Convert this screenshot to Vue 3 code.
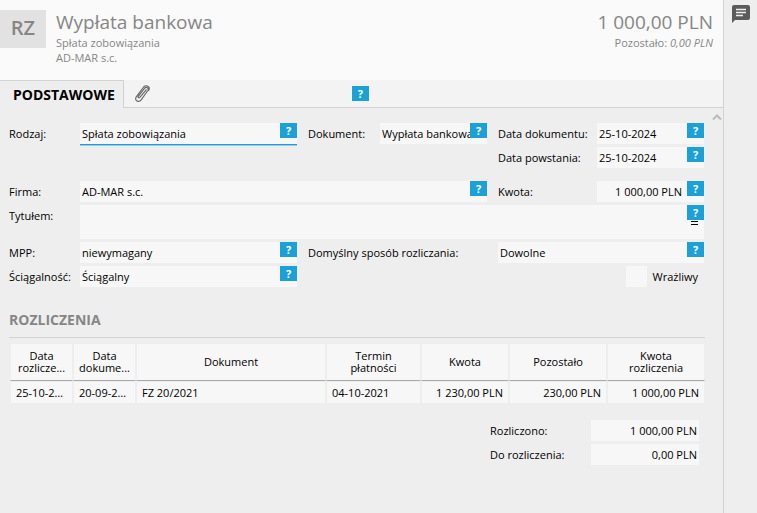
<script setup>
import { ref } from 'vue'

const form = ref({
  kind: 'Spłata zobowiązania',
  document: 'Wypłata bankowa',
  documentDate: '25-10-2024',
  createdDate: '25-10-2024',
  company: 'AD-MAR s.c.',
  amount: '1 000,00 PLN',
  title: '',
  mpp: 'niewymagany',
  method: 'Dowolne',
  collectability: 'Ściągalny',
  sensitive: false,
  settled: '1 000,00 PLN',
  remaining: '0,00 PLN',
})

const rows = [
  ['25-10-2024', '20-09-2021', 'FZ 20/2021', '04-10-2021', '1 230,00 PLN', '230,00 PLN', '1 000,00 PLN'],
]
</script>

<template>
  <div class="app">
    <main class="main">
      <header class="header">
        <div class="avatar">RZ</div>
        <div class="heading">
          <h1>Wypłata bankowa</h1>
          <p>Spłata zobowiązania</p>
          <p>AD-MAR s.c.</p>
        </div>
        <div class="summary">
          <strong>1 000,00 PLN</strong>
          <p>Pozostało: <em>0,00 PLN</em></p>
        </div>
      </header>

      <nav class="tabs">
        <button type="button" class="tab active">PODSTAWOWE</button>
        <button type="button" class="tab clip" aria-label="Załączniki">
          <svg width="18" height="18" viewBox="0 0 18 18" fill="none" stroke="#6a6a6a" stroke-width="1.2" stroke-linecap="round">
            <path d="M13.200 4.800 6.800 12.400c-.9 1-2.300-.1-1.400-1.200L11.500 3.300c1.800-2.200 4.800-.2 3.300 2.200L8.200 14.900c-2.400 3.200-7.200.6-4.900-3.100L10.600 2c1.600-1.900 4.700-1.500 5.500.5.400 1 .1 2-.6 3" />
          </svg>
        </button>
        <div class="tabs-rest"><button type="button" class="help">?</button></div>
      </nav>

      <section class="body">
        <svg class="chevron" width="10" height="8" viewBox="0 0 10 8" fill="none" stroke="#bcbcbc" stroke-width="2">
          <path d="M1 6.500 5 2.500l4 4" />
        </svg>
        <form class="form" @submit.prevent>
          <label for="kind">Rodzaj:</label>
          <div class="field focused"><input id="kind" v-model="form.kind" type="text" /><button type="button" class="help">?</button></div>
          <label class="c4" for="document">Dokument:</label>
          <div class="field"><input id="document" v-model="form.document" type="text" /><button type="button" class="help">?</button></div>
          <label class="c7" for="documentDate">Data dokumentu:</label>
          <div class="field"><input id="documentDate" v-model="form.documentDate" type="text" /><button type="button" class="help">?</button></div>

          <label class="c7" for="createdDate">Data powstania:</label>
          <div class="field"><input id="createdDate" v-model="form.createdDate" type="text" /><button type="button" class="help">?</button></div>

          <label class="c1 spaced" for="company">Firma:</label>
          <div class="field wide spaced"><input id="company" v-model="form.company" type="text" /><button type="button" class="help">?</button></div>
          <label class="c7 spaced" for="amount">Kwota:</label>
          <div class="field money spaced"><input id="amount" v-model="form.amount" type="text" /><button type="button" class="help">?</button></div>

          <label class="c1" for="title">Tytułem:</label>
          <div class="field full">
            <textarea id="title" v-model="form.title"></textarea>
            <button type="button" class="help">?</button>
            <span class="grip"></span>
          </div>

          <label class="c1" for="mpp">MPP:</label>
          <div class="field"><input id="mpp" v-model="form.mpp" type="text" /><button type="button" class="help">?</button></div>
          <label class="c4 long" for="method">Domyślny sposób rozliczania:</label>
          <div class="field method"><input id="method" v-model="form.method" type="text" /><button type="button" class="help">?</button></div>

          <label class="c1" for="collectability">Ściągalność:</label>
          <div class="field"><input id="collectability" v-model="form.collectability" type="text" /><button type="button" class="help">?</button></div>
          <label class="check"><input v-model="form.sensitive" type="checkbox" />Wrażliwy</label>
        </form>

        <h2>ROZLICZENIA</h2>
        <table>
          <colgroup>
            <col class="w-date" /><col class="w-date" /><col /><col class="w-due" />
            <col class="w-amount" /><col class="w-left" /><col class="w-left" />
          </colgroup>
          <thead>
            <tr>
              <th>Data<br />rozlicze...</th>
              <th>Data<br />dokume...</th>
              <th>Dokument</th>
              <th>Termin<br />płatności</th>
              <th>Kwota</th>
              <th>Pozostało</th>
              <th>Kwota<br />rozliczenia</th>
            </tr>
          </thead>
          <tbody>
            <tr v-for="row in rows" :key="row[2]">
              <td v-for="(cell, i) in row" :key="i" :class="{ num: i > 3 }">{{ cell }}</td>
            </tr>
          </tbody>
        </table>

        <div class="totals">
          <label for="settled">Rozliczono:</label>
          <div class="field"><input id="settled" v-model="form.settled" type="text" /></div>
          <label for="remaining">Do rozliczenia:</label>
          <div class="field"><input id="remaining" v-model="form.remaining" type="text" /></div>
        </div>
      </section>
    </main>

    <aside class="side">
      <button type="button" aria-label="Komentarze">
        <svg width="18" height="18" viewBox="0 0 18 18">
          <path fill="#5b5b5b" d="M2 0h14a2 2 0 0 1 2 2v11a2 2 0 0 1-2 2H3l-3 3V2a2 2 0 0 1 2-2z" />
          <path stroke="#eee" stroke-width="1.500" d="M4 4.500h10M4 7.500h10M4 10.500h7" />
        </svg>
      </button>
    </aside>
  </div>
</template>

<style>
body {
  background: #eeeeee;
}
</style>

<style scoped>
.app {
  display: flex;
  min-height: 100vh;
  font-family: "Open Sans", "Noto Sans", sans-serif;
  font-size: 11px;
  line-height: 15px;
  color: #000;
  background: #eeeeee;
}
h1, h2, p {
  margin: 0;
}
button, input, textarea {
  font: inherit;
  color: inherit;
  border: 0;
  padding: 0;
  margin: 0;
  border-radius: 0;
  background: none;
}
.main {
  flex: 1;
  min-width: 0;
}
.header {
  display: flex;
  height: 70px;
  padding: 10px 10px 0 0;
  gap: 10px;
  background: #fafafa;
  color: #868686;
}
.avatar {
  width: 46px;
  height: 38px;
  line-height: 36px;
  text-align: center;
  font-size: 20px;
  font-weight: 600;
  background: #e2e2e2;
}
.heading {
  flex: 1;
}
h1, .summary strong {
  display: block;
  font-size: 19px;
  line-height: 24px;
  font-weight: 400;
}
h1, .summary strong {
  padding-bottom: 1px;
}
.summary {
  text-align: right;
}
.tabs {
  display: flex;
  height: 28px;
  background: #f3f3f3;
}
.tab {
  border-bottom: 1px solid #d2d2d2;
}
.tab.active {
  padding: 0 8px 0 13px;
  font-size: 14px;
  font-weight: 700;
  background: #eeeeee;
  border-top: 1px solid #d2d2d2;
  border-right: 1px solid #d2d2d2;
  border-bottom: 0;
}
.clip {
  width: 36px;
}
.clip svg {
  display: block;
  margin: 0 auto;
}
.tabs-rest {
  flex: 1;
  display: flex;
  align-items: flex-start;
  padding: 6px 0 0 192px;
  border-bottom: 1px solid #d2d2d2;
}
.help {
  width: 17px;
  height: 15px;
  font-family: "Noto Sans", sans-serif;
  font-size: 11px;
  line-height: 15px;
  font-weight: 700;
  text-align: center;
  color: #fff;
  background: #1ba1d6;
}
.body {
  position: relative;
  padding: 15px 18px 0 9px;
}
.chevron {
  position: absolute;
  top: 5px;
  right: 1px;
}
.form {
  display: grid;
  grid-template-columns: 71px minmax(0, 217fr) 11px 72px minmax(0, 107fr) 11px 99px minmax(0, 107fr);
  row-gap: 3px;
  padding-right: 1px;
}
label {
  line-height: 21px;
  white-space: nowrap;
}
.c1 { grid-column: 1; }
.c4 { grid-column: 4; }
.c7 { grid-column: 7; }
.long { grid-column: 4 / 7; }
.wide { grid-column: 2 / 6; }
.full { grid-column: 2 / 9; }
.method { grid-column: 7 / 9; }
.spaced { margin-top: 10px; }
.field {
  position: relative;
  display: flex;
  height: 21px;
  background: #f7f7f7;
}
.field input {
  flex: 1;
  min-width: 0;
  padding: 0 2px;
  outline: none;
}
.field .help {
  position: absolute;
  top: 0;
  right: 0;
}
.focused {
  box-shadow: 0 1px #1ba1e2, 0 2px #8fcdee;
}
.money input {
  padding-right: 22px;
  text-align: right;
}
.field.full {
  height: 34px;
}
textarea {
  flex: 1;
  resize: none;
  outline: none;
}
.grip {
  position: absolute;
  right: 6px;
  top: 16px;
  width: 7px;
  height: 2px;
  border: solid #000;
  border-width: 1px 0;
}
.check {
  grid-column: 7 / 9;
  display: flex;
  justify-content: flex-end;
  gap: 5px;
  padding-right: 6px;
}
.check input {
  appearance: none;
  width: 21px;
  height: 21px;
  background: #f7f7f7;
}
h2 {
  padding: 22px 0 6px;
  font-size: 14px;
  line-height: 22px;
  font-weight: 700;
  color: #868686;
  border-bottom: 1px solid #d2d2d2;
}
table {
  width: 100%;
  margin-top: 6px;
  padding-left: 1px;
  border-collapse: separate;
  border-spacing: 0;
  table-layout: fixed;
}
.w-date { width: 63px; }
.w-due { width: 95px; }
.w-amount { width: 88px; }
.w-left { width: 98px; }
th, td {
  height: 21px;
  padding: 0 5px;
  border: solid #eeeeee;
  border-width: 0 1px;
  background: #f7f7f7;
  font-weight: 400;
  text-align: left;
  white-space: nowrap;
  overflow: hidden;
  text-overflow: ellipsis;
}
th {
  height: 36px;
  line-height: 12px;
  text-align: center;
  padding: 0 2px;
  border-bottom: 1px solid #aaaaaa;
}
td {
  border-top: 1px solid #eeeeee;
}
.num {
  text-align: right;
}
.totals {
  display: grid;
  grid-template-columns: 101px 108px;
  justify-content: end;
  row-gap: 3px;
  padding: 17px 6px 0 0;
}
.totals input {
  text-align: right;
}
.side {
  width: 33px;
  border-left: 1px solid #d2d2d2;
}
.side button {
  display: block;
  margin: 5px 0 0 8px;
}
.side svg {
  display: block;
}
</style>
